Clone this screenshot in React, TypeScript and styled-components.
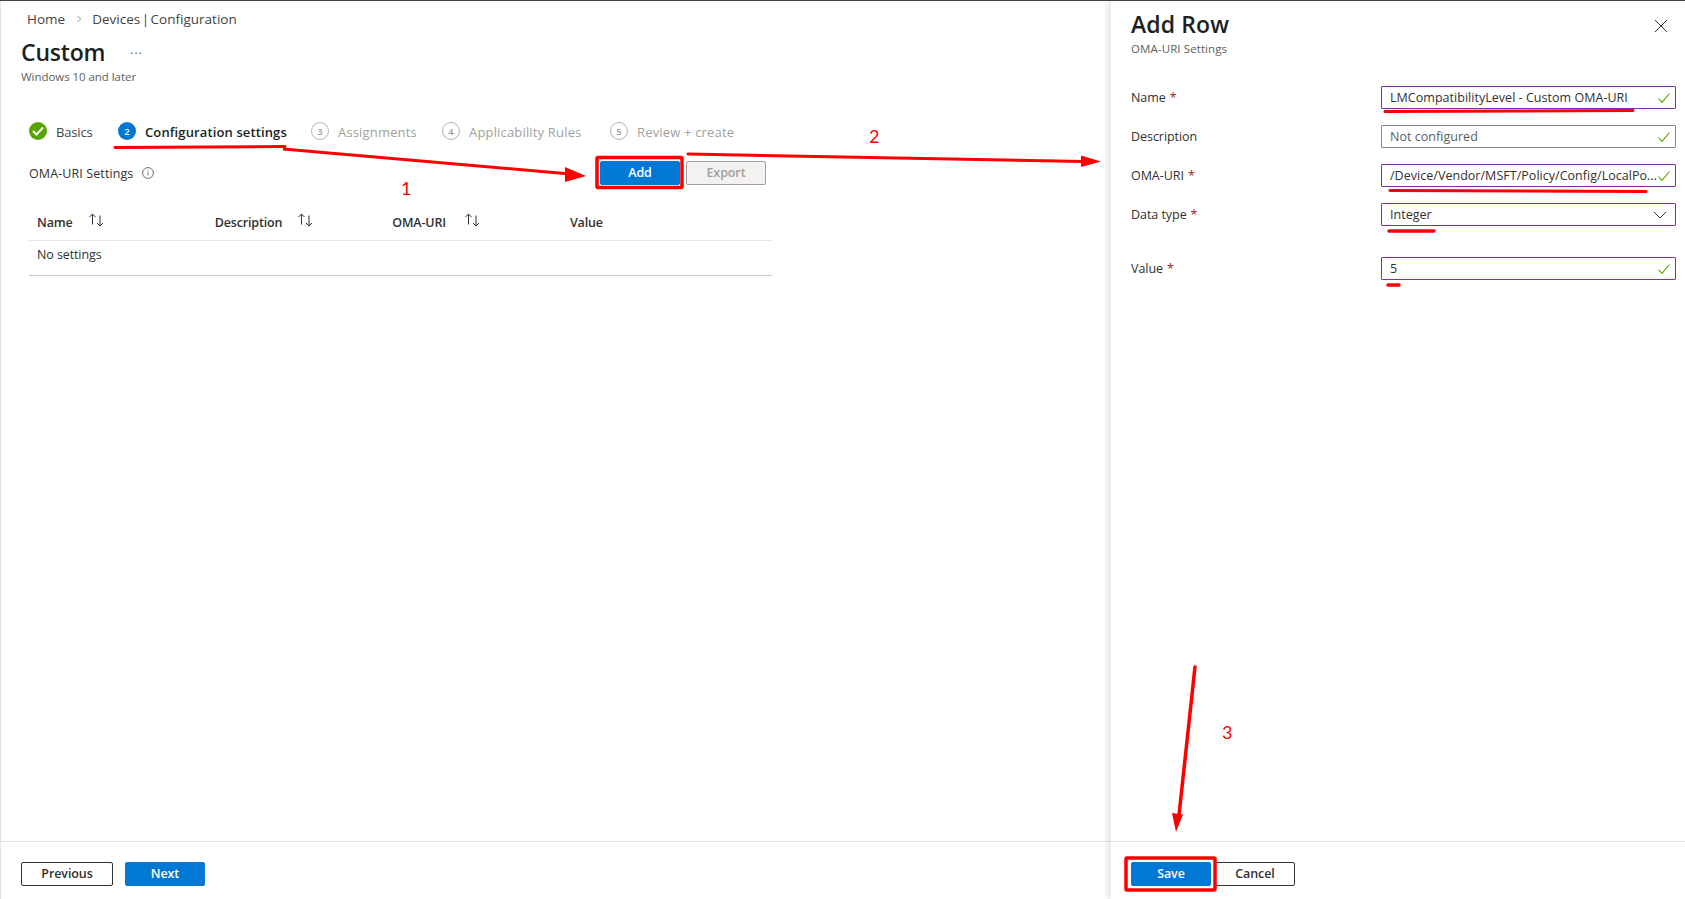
import React from "react";
import styled, { createGlobalStyle } from "styled-components";

const Global = createGlobalStyle`
  html, body { margin: 0; padding: 0; background: #fff; }
  body { font-family: "Open Sans", "Noto Sans", "Liberation Sans", sans-serif; color: #323130; font-size: 12.5px; overflow: hidden; }
  * { box-sizing: border-box; }
`;

const Shell = styled.div`
  position: relative;
  display: flex;
  width: 1685px;
  height: 899px;
  border-top: 1px solid #444;
  overflow: hidden;
`;
const Main = styled.main`
  width: 1111px;
  display: flex;
  flex-direction: column;
  border-left: 1px solid #e3e3e3;
`;
const MainBody = styled.div`
  flex: 1;
`;
const Breadcrumb = styled.nav`
  display: flex;
  align-items: center;
  height: 20px;
  margin-top: 8px;
  padding-left: 26px;
  font-size: 13.5px;
  color: #444;
`;
const Crumb = styled.span`
  white-space: nowrap;
  word-spacing: -2px;
`;
const CrumbSep = styled.span`
  display: flex;
  width: 27px;
  justify-content: center;
`;
const TitleRow = styled.div`
  display: flex;
  align-items: center;
  height: 32px;
  margin-top: 7px;
  padding-left: 20px;
`;
const Title = styled.h1`
  margin: 0;
  font-size: 23px;
  font-weight: 600;
  letter-spacing: -0.2px;
  color: #201f1e;
`;
const Dots = styled.span`
  margin-left: 25px;
  font-size: 12px;
  line-height: 12px;
  letter-spacing: 1px;
  color: #555;
  transform: translateY(-2px);
`;
const Subtitle = styled.div`
  height: 16px;
  margin-top: 1px;
  line-height: 16px;
  padding-left: 20px;
  font-size: 11.5px;
  letter-spacing: -0.05px;
  color: #605e5c;
`;
const Stepper = styled.div`
  display: flex;
  align-items: center;
  height: 22px;
  margin-top: 36px;
  padding-left: 28px;
`;
const Step = styled.div<{ $w: number }>`
  display: flex;
  align-items: center;
  width: ${(p) => p.$w}px;
  white-space: nowrap;
`;
const StepMark = styled.span<{ $state: "done" | "active" | "todo" }>`
  display: flex;
  align-items: center;
  justify-content: center;
  flex: none;
  width: 18px;
  height: 18px;
  margin-right: ${(p) => (p.$state === "active" ? 9 : 9)}px;
  border-radius: 50%;
  font-size: 9.5px;
  font-weight: 600;
  color: ${(p) => (p.$state === "todo" ? "#a19f9d" : "#fff")};
  background: ${(p) =>
    p.$state === "done" ? "#57a300" : p.$state === "active" ? "#0078d4" : "transparent"};
  border: ${(p) => (p.$state === "todo" ? "1px solid #b5b3b1" : "none")};
  transform: translateY(-1px);
`;
const StepLabel = styled.span<{ $state: "done" | "active" | "todo" }>`
  font-size: 13px;
  letter-spacing: ${(p) => (p.$state === "active" ? "0.12px" : p.$state === "todo" ? "0.17px" : "-0.15px")};
  font-weight: ${(p) => (p.$state === "active" ? 600 : 400)};
  color: ${(p) => (p.$state === "todo" ? "#a19f9d" : p.$state === "active" ? "#201f1e" : "#444")};
`;
const Toolbar = styled.div`
  display: flex;
  align-items: center;
  justify-content: space-between;
  width: 737px;
  height: 24px;
  margin: 18px 0 0 28px;
`;
const SettingLabel = styled.div`
  display: flex;
  align-items: center;
  gap: 9px;
  font-size: 12.5px;
  letter-spacing: 0.1px;
  color: #323130;
`;
const ToolbarButtons = styled.div`
  display: flex;
  gap: 6px;
`;
const Button = styled.button<{ $kind: "primary" | "outline" | "disabled"; $w: number }>`
  width: ${(p) => p.$w}px;
  height: 24px;
  padding: 0 0 1px;
  border-radius: 2px;
  font-family: inherit;
  font-size: 12.5px;
  font-weight: 600;
  letter-spacing: -0.1px;
  background: ${(p) =>
    p.$kind === "primary" ? "#0078d4" : p.$kind === "disabled" ? "#f3f2f1" : "#fff"};
  color: ${(p) => (p.$kind === "primary" ? "#fff" : p.$kind === "disabled" ? "#a19f9d" : "#323130")};
  border: 1px solid
    ${(p) => (p.$kind === "primary" ? "#0078d4" : p.$kind === "disabled" ? "#a19f9d" : "#323130")};
`;
const Table = styled.div`
  width: 743px;
  margin: 20px 0 0 28px;
`;
const HeadRow = styled.div`
  display: grid;
  grid-template-columns: 177.67px 177.67px 177.67px 1fr;
  height: 36px;
  align-items: center;
  border-bottom: 1px solid #e8e8e8;
`;
const HeadCell = styled.div<{ $gap?: number }>`
  display: flex;
  align-items: center;
  padding-left: 8px;
  gap: ${(p) => p.$gap ?? 0}px;
  font-size: 12.5px;
  font-weight: 600;
  letter-spacing: -0.15px;
  color: #323130;
`;
const SortIcon = styled.svg`
  flex: none;
  transform: translateY(-3px);
`;
const BodyRow = styled.div`
  height: 35px;
  padding: 0 0 7px 8px;
  display: flex;
  align-items: center;
  font-size: 12.5px;
  letter-spacing: -0.1px;
  border-bottom: 1px solid #c8c8c8;
`;
const Footer = styled.footer`
  flex: none;
  display: flex;
  height: 58px;
  gap: 12px;
  padding: 20px 0 0 20px;
  border-top: 1px solid #e1e1e1;
`;
const Panel = styled.aside`
  width: 574px;
  display: flex;
  flex-direction: column;
  background: #fff;
  box-shadow: -4px 0 6px rgba(0, 0, 0, 0.1);
  z-index: 1;
`;
const PanelBody = styled.div`
  flex: 1;
  padding: 0 9px 0 20px;
`;
const PanelHead = styled.div`
  display: flex;
  justify-content: space-between;
  height: 85px;
`;
const PanelTitle = styled.h2`
  margin: 7px 0 1px;
  height: 32px;
  line-height: 32px;
  font-size: 23px;
  font-weight: 600;
  letter-spacing: 0.1px;
  color: #201f1e;
`;
const PanelSub = styled.div`
  height: 16px;
  line-height: 16px;
  font-size: 11.5px;
  letter-spacing: 0.1px;
  color: #605e5c;
`;
const CloseBtn = styled.span`
  display: flex;
  margin: 18px 8px 0 0;
  height: 14px;
  width: 14px;
`;
const FormRow = styled.div<{ $after?: number }>`
  display: grid;
  grid-template-columns: 250px 1fr;
  align-items: center;
  height: 23px;
  margin-bottom: ${(p) => p.$after ?? 16}px;
`;
const FieldLabel = styled.label`
  font-size: 12.5px;
  letter-spacing: -0.05px;
  color: #323130;
`;
const Star = styled.span`
  margin-left: 4px;
  color: #a4262c;
`;
const Field = styled.div<{ $active?: boolean }>`
  display: flex;
  align-items: center;
  height: 23px;
  padding: 0 4px 0 8px;
  border: 1px solid ${(p) => (p.$active ? "#7f2fa8" : "#8a8886")};
  border-radius: 1px;
`;
const FieldValue = styled.span<{ $muted?: boolean }>`
  flex: 1;
  font-size: 12.5px;
  letter-spacing: 0.03px;
  white-space: nowrap;
  overflow: hidden;
  color: ${(p) => (p.$muted ? "#605e5c" : "#323130")};
`;
const Chevron = styled.svg`
  flex: none;
  margin-right: 4px;
`;
const PanelFooter = styled.footer`
  flex: none;
  display: flex;
  height: 58px;
  gap: 4px;
  padding: 20px 0 0 20px;
  border-top: 1px solid #e1e1e1;
`;
const Overlay = styled.svg`
  position: absolute;
  left: 0;
  top: -1px;
  width: 1685px;
  height: 899px;
  z-index: 2;
  pointer-events: none;
`;
const Note = styled.span<{ $x: number; $y: number }>`
  position: absolute;
  left: ${(p) => p.$x}px;
  top: ${(p) => p.$y}px;
  z-index: 3;
  font-family: "Lato", "Liberation Sans", sans-serif;
  font-size: 18px;
  line-height: 20px;
  color: #f00;
`;

const Sort = () => (
  <SortIcon width="17" height="14" viewBox="0 0 17 14" fill="none" stroke="#323130" strokeWidth="1">
    <path d="M4.5 11.5V1M1.5 4l3-3 3 3" />
    <path d="M12 2.5V13M9 10l3 3 3-3" />
  </SortIcon>
);
const Ok = () => (
  <svg width="14" height="12" viewBox="0 0 14 12" fill="none" stroke="#57a300" strokeWidth="1.1">
    <path d="M1.5 6.5l3.5 3.8L12.5 1.5" />
  </svg>
);
const Info = () => (
  <svg width="12" height="12" viewBox="0 0 12 12" fill="none" stroke="#605e5c" strokeWidth="0.9">
    <circle cx="6" cy="6" r="5.4" />
    <path d="M6 5.2v3.4M6 3.2v1" />
  </svg>
);

const Step1 = () => (
  <svg width="12" height="10" viewBox="0 0 12 10" fill="none" stroke="#fff" strokeWidth="2">
    <path d="M1 5l3.5 3.5L11 1.5" />
  </svg>
);

export default function App() {
  return (
    <>
      <Global />
      <Shell>
        <Main>
          <MainBody>
            <Breadcrumb>
              <Crumb>Home</Crumb>
              <CrumbSep>
                <svg width="6" height="8" viewBox="0 0 6 8" fill="none" stroke="#888" strokeWidth="0.9">
                  <path d="M1.5 0.8L4.6 4 1.5 7.2" />
                </svg>
              </CrumbSep>
              <Crumb>Devices | Configuration</Crumb>
            </Breadcrumb>
            <TitleRow>
              <Title>Custom</Title>
              <Dots>...</Dots>
            </TitleRow>
            <Subtitle>Windows 10 and later</Subtitle>
            <Stepper>
              <Step $w={89}>
                <StepMark $state="done"><Step1 /></StepMark>
                <StepLabel $state="done">Basics</StepLabel>
              </Step>
              <Step $w={193}>
                <StepMark $state="active">2</StepMark>
                <StepLabel $state="active">Configuration settings</StepLabel>
              </Step>
              <Step $w={131}>
                <StepMark $state="todo">3</StepMark>
                <StepLabel $state="todo">Assignments</StepLabel>
              </Step>
              <Step $w={168}>
                <StepMark $state="todo">4</StepMark>
                <StepLabel $state="todo">Applicability Rules</StepLabel>
              </Step>
              <Step $w={140}>
                <StepMark $state="todo">5</StepMark>
                <StepLabel $state="todo">Review + create</StepLabel>
              </Step>
            </Stepper>
            <Toolbar>
              <SettingLabel>
                OMA-URI Settings
                <Info />
              </SettingLabel>
              <ToolbarButtons>
                <Button $kind="primary" $w={80}>Add</Button>
                <Button $kind="disabled" $w={80}>Export</Button>
              </ToolbarButtons>
            </Toolbar>
            <Table>
              <HeadRow>
                <HeadCell $gap={15}>Name <Sort /></HeadCell>
                <HeadCell $gap={15}>Description <Sort /></HeadCell>
                <HeadCell $gap={18}>OMA-URI <Sort /></HeadCell>
                <HeadCell>Value</HeadCell>
              </HeadRow>
              <BodyRow>No settings</BodyRow>
            </Table>
          </MainBody>
          <Footer>
            <Button $kind="outline" $w={92}>Previous</Button>
            <Button $kind="primary" $w={80}>Next</Button>
          </Footer>
        </Main>
        <Panel>
          <PanelBody>
            <PanelHead>
              <div>
                <PanelTitle>Add Row</PanelTitle>
                <PanelSub>OMA-URI Settings</PanelSub>
              </div>
              <CloseBtn>
                <svg width="14" height="14" viewBox="0 0 14 14" fill="none" stroke="#323130" strokeWidth="1">
                  <path d="M1 1l12 12M13 1L1 13" />
                </svg>
              </CloseBtn>
            </PanelHead>
            <FormRow>
              <FieldLabel>Name<Star>*</Star></FieldLabel>
              <Field $active>
                <FieldValue>LMCompatibilityLevel - Custom OMA-URI</FieldValue>
                <Ok />
              </Field>
            </FormRow>
            <FormRow>
              <FieldLabel>Description</FieldLabel>
              <Field>
                <FieldValue $muted>Not configured</FieldValue>
                <Ok />
              </Field>
            </FormRow>
            <FormRow>
              <FieldLabel>OMA-URI<Star>*</Star></FieldLabel>
              <Field $active>
                <FieldValue>/Device/Vendor/MSFT/Policy/Config/LocalPo...</FieldValue>
                <Ok />
              </Field>
            </FormRow>
            <FormRow $after={31}>
              <FieldLabel>Data type<Star>*</Star></FieldLabel>
              <Field $active>
                <FieldValue>Integer</FieldValue>
                <Chevron width="14" height="8" viewBox="0 0 14 8" fill="none" stroke="#323130" strokeWidth="1">
                  <path d="M1 1l6 6 6-6" />
                </Chevron>
              </Field>
            </FormRow>
            <FormRow>
              <FieldLabel>Value<Star>*</Star></FieldLabel>
              <Field $active>
                <FieldValue>5</FieldValue>
                <Ok />
              </Field>
            </FormRow>
          </PanelBody>
          <PanelFooter>
            <Button $kind="primary" $w={80}>Save</Button>
            <Button $kind="outline" $w={80}>Cancel</Button>
          </PanelFooter>
        </Panel>

        <Overlay viewBox="0 0 1685 899" fill="none" stroke="#f00">
          <path d="M115 147.5L285 146.5" strokeWidth="3" strokeLinecap="round" />
          <path d="M283 149L570 174" strokeWidth="3" />
          <path d="M565 167L586 176L565 182Z" fill="#f00" stroke="none" />
          <rect x="597" y="157.5" width="85" height="30" rx="1" strokeWidth="3.5" />
          <path d="M688 154L1083 161.5" strokeWidth="3" strokeLinecap="round" />
          <path d="M1081 155.5L1101 161.5L1081 167Z" fill="#f00" stroke="none" />
          <path d="M1195 667L1179 815" strokeWidth="3.5" strokeLinecap="round" />
          <path d="M1172 813L1183 814.5L1176 832Z" fill="#f00" stroke="none" />
          <rect x="1126" y="858" width="89" height="32" rx="1" strokeWidth="3.5" />
          <path d="M1385 111.5L1633 110.5" strokeWidth="3" strokeLinecap="round" />
          <path d="M1390 190.5L1646 191.5" strokeWidth="3" strokeLinecap="round" />
          <path d="M1389 231L1434 231" strokeWidth="3.5" strokeLinecap="round" />
          <path d="M1388 285L1399 285" strokeWidth="3.5" strokeLinecap="round" />
        </Overlay>
        <Note $x={401} $y={177}>1</Note>
        <Note $x={869} $y={125}>2</Note>
        <Note $x={1222} $y={721}>3</Note>
      </Shell>
    </>
  );
}
